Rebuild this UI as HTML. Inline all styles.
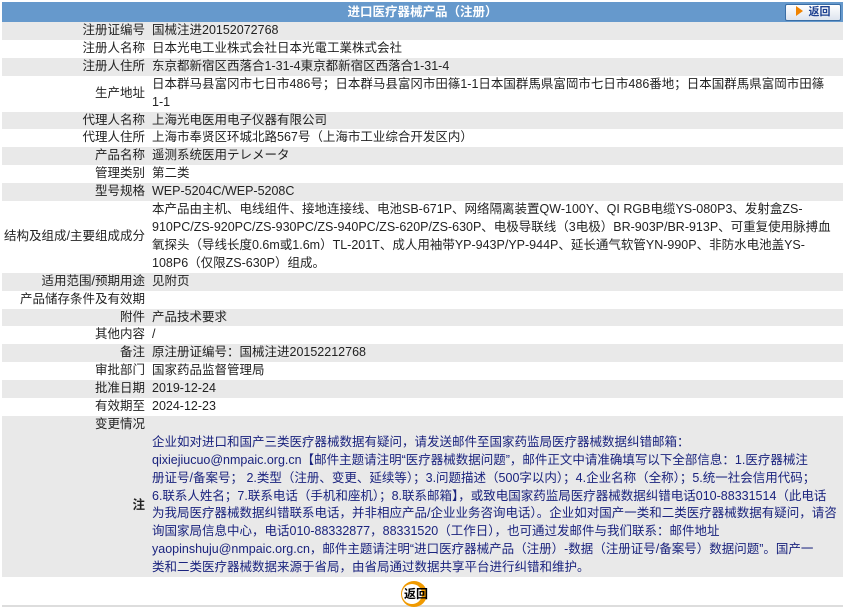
<!DOCTYPE html>
<html><head><meta charset="utf-8"><style>
body{margin:0;background:#fff;font-family:"Liberation Sans","Noto Sans CJK SC",sans-serif;font-size:12.5px;color:#222;}
.wrap{position:absolute;left:2px;top:2px;width:841px;}
.hd{height:20px;background:#6699cc;color:#fff;font-weight:bold;text-align:center;line-height:20px;position:relative;font-size:12.5px;}
.btn{position:absolute;right:2px;top:2px;width:54px;height:15px;border:1px solid #3a6ea5;border-radius:2px;background:linear-gradient(#fff,#dde4ee);color:#1b3f8f;font-size:11px;line-height:15px;text-align:center}
.btn i{display:inline-block;width:0;height:0;border-left:7px solid #f08300;border-top:5px solid transparent;border-bottom:5px solid transparent;vertical-align:-1px;margin-right:6px;position:relative}
table{border-collapse:collapse;width:841px;}
td{padding:0;line-height:17.9px;vertical-align:middle;white-space:nowrap}
td.l{width:143px;text-align:right;padding-right:5px;}
td.v{padding-left:2px}
tr.g td{background:#e9e9e9}
.n{color:#1a237e}
.foot{height:28px;position:relative;border-bottom:2px solid #ddd;width:841px}
.rb{position:absolute;left:399px;top:4px;width:26px;height:26px;border-radius:50%;background:#f09a00;}
.rb:after{content:"";position:absolute;left:1px;top:3px;width:20px;height:20px;border-radius:50%;background:#fff}
.rt{position:absolute;left:402px;top:8px;font-weight:bold;font-size:12px;z-index:2;color:#000}
</style></head><body><div class="wrap">
<div class="hd">进口医疗器械产品（注册）<div class="btn"><i></i>返回</div></div>
<table>
<tr class="g"><td class="l">注册证编号</td><td class="v">国械注进20152072768</td></tr>
<tr><td class="l">注册人名称</td><td class="v">日本光电工业株式会社日本光電工業株式会社</td></tr>
<tr class="g"><td class="l">注册人住所</td><td class="v">东京都新宿区西落合1-31-4東京都新宿区西落合1-31-4</td></tr>
<tr><td class="l">生产地址</td><td class="v">日本群马县富冈市七日市486号；日本群马县富冈市田篠1-1日本国群馬県富岡市七日市486番地；日本国群馬県富岡市田篠<br>1-1</td></tr>
<tr class="g"><td class="l">代理人名称</td><td class="v">上海光电医用电子仪器有限公司</td></tr>
<tr><td class="l">代理人住所</td><td class="v">上海市奉贤区环城北路567号（上海市工业综合开发区内）</td></tr>
<tr class="g"><td class="l">产品名称</td><td class="v">遥测系统医用テレメータ</td></tr>
<tr><td class="l">管理类别</td><td class="v">第二类</td></tr>
<tr class="g"><td class="l">型号规格</td><td class="v">WEP-5204C/WEP-5208C</td></tr>
<tr><td class="l">结构及组成/主要组成成分</td><td class="v">本产品由主机、电线组件、接地连接线、电池SB-671P、网络隔离装置QW-100Y、QI RGB电缆YS-080P3、发射盒ZS-<br>910PC/ZS-920PC/ZS-930PC/ZS-940PC/ZS-620P/ZS-630P、电极导联线（3电极）BR-903P/BR-913P、可重复使用脉搏血<br>氧探头（导线长度0.6m或1.6m）TL-201T、成人用袖带YP-943P/YP-944P、延长通气软管YN-990P、非防水电池盖YS-<br>108P6（仅限ZS-630P）组成。</td></tr>
<tr class="g"><td class="l">适用范围/预期用途</td><td class="v">见附页</td></tr>
<tr><td class="l">产品储存条件及有效期</td><td class="v"></td></tr>
<tr class="g"><td class="l">附件</td><td class="v">产品技术要求</td></tr>
<tr><td class="l">其他内容</td><td class="v">/</td></tr>
<tr class="g"><td class="l">备注</td><td class="v">原注册证编号：国械注进20152212768</td></tr>
<tr><td class="l">审批部门</td><td class="v">国家药品监督管理局</td></tr>
<tr class="g"><td class="l">批准日期</td><td class="v">2019-12-24</td></tr>
<tr><td class="l">有效期至</td><td class="v">2024-12-23</td></tr>
<tr class="g"><td class="l">变更情况</td><td class="v"></td></tr>
<tr class="g"><td class="l"><b>注</b></td><td class="v n">企业如对进口和国产三类医疗器械数据有疑问，请发送邮件至国家药监局医疗器械数据纠错邮箱：<br>qixiejiucuo@nmpaic.org.cn【邮件主题请注明“医疗器械数据问题”，邮件正文中请准确填写以下全部信息：1.医疗器械注<br>册证号/备案号； 2.类型（注册、变更、延续等）；3.问题描述（500字以内）；4.企业名称（全称）；5.统一社会信用代码；<br>6.联系人姓名；7.联系电话（手机和座机）；8.联系邮箱】，或致电国家药监局医疗器械数据纠错电话010-88331514（此电话<br>为我局医疗器械数据纠错联系电话，并非相应产品/企业业务咨询电话）。企业如对国产一类和二类医疗器械数据有疑问，请咨<br>询国家局信息中心，电话010-88332877，88331520（工作日），也可通过发邮件与我们联系：邮件地址<br>yaopinshuju@nmpaic.org.cn，邮件主题请注明“进口医疗器械产品（注册）-数据（注册证号/备案号）数据问题”。国产一<br>类和二类医疗器械数据来源于省局，由省局通过数据共享平台进行纠错和维护。</td></tr>
</table>
<div class="foot"><div class="rb"></div><div class="rt">返回</div></div>
</div></body></html>
